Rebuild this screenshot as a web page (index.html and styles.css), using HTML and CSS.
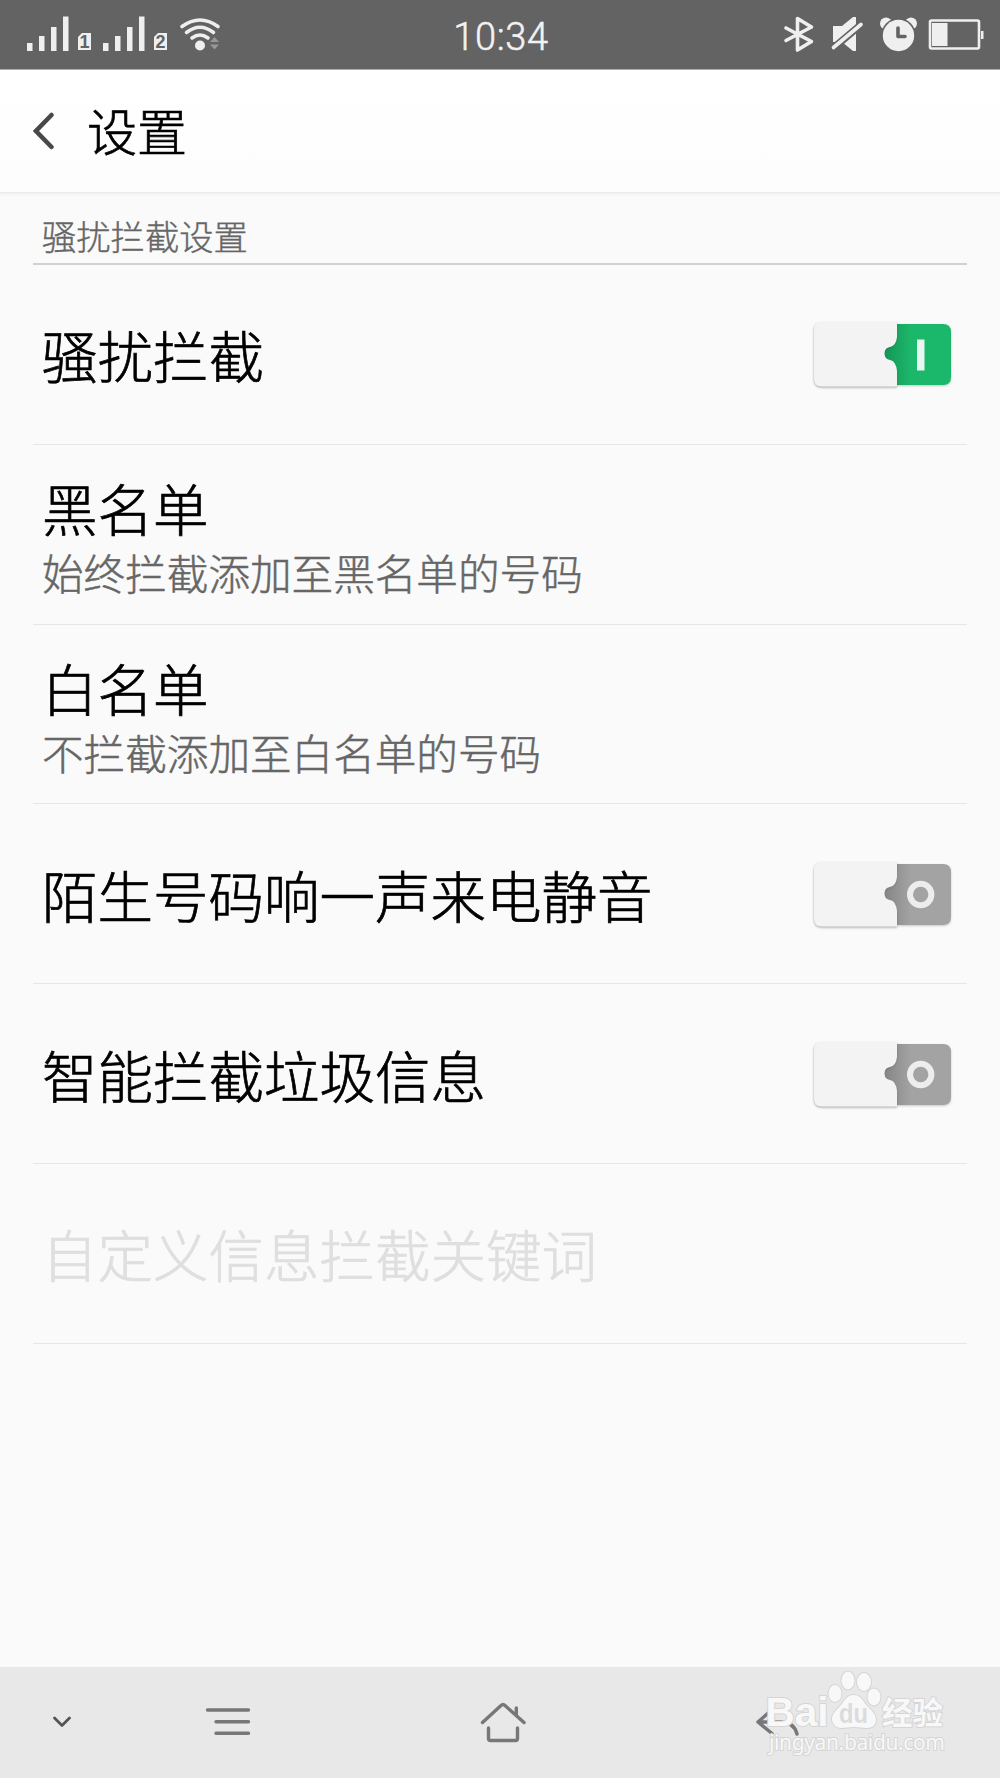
FILE: index.html
```
<!DOCTYPE html>
<html lang="zh-CN">
	<head>
		<meta charset="utf-8"/>
		<meta name="viewport" content="width=device-width, initial-scale=1.0"/>

		<title>设置</title>

		<link rel="stylesheet" href="styles.css">
	</head>
	<body>
		<div class="status-bar">
			<svg class="status-left" width="222" height="69" viewBox="0 0 222 69" fill="#efefef">
				<path d="M27 43h5.500v8h-5.500zM39 36h5.500v15h-5.500zM51 27h5.500v24h-5.500zM63 16.500h5.500v34.500h-5.500z"/>
				<path d="M103 43h5.500v8h-5.500zM115 36h5.500v15h-5.500zM127 27h5.500v24h-5.500zM139 16.500h5.500v34.500h-5.500z"/>
				<path d="M82 33h9v17h-13v-13zM158 33h9v17h-13v-13z"/>
				<text class="sim" x="84.500" y="48" text-anchor="middle">1</text>
				<text class="sim" x="160.500" y="48" text-anchor="middle">2</text>
				<circle cx="200" cy="45.500" r="5"/>
				<g fill="none" stroke="#efefef" stroke-width="3.600" stroke-linecap="round">
					<path d="M182 26.500Q200 13.500 218 26.500"/>
					<path d="M186.500 32.500Q200 22 213.500 32.500"/>
					<path d="M192 38Q200 32 208 38"/>
				</g>
				<path fill="#979797" d="M214.500 37l4.500 5h-9zM214.500 49.500l4.500-5h-9z"/>
			</svg>
			<span class="clock">10:34</span>
			<svg class="status-right" width="220" height="69" viewBox="780 0 220 69" fill="#efefef">
				<path fill="none" stroke="#efefef" stroke-width="3.600" stroke-linejoin="round" stroke-linecap="round" d="M786 28l25.500 13.500-14 8.500V18.500l14 8.500-25.500 13.500"/>
				<path d="M833 26h9l11-9h3v34h-3l-11-9h-9z"/>
				<path fill="none" stroke="#636363" stroke-width="7.500" d="M831 50l32-27"/>
				<path fill="none" stroke="#efefef" stroke-width="3.600" stroke-linecap="round" d="M833.500 47.500l27.500-23"/>
				<circle cx="886" cy="23.500" r="6"/>
				<circle cx="911" cy="23.500" r="6"/>
				<circle cx="898.500" cy="35.500" r="17.300" fill="#636363"/>
				<circle cx="898.500" cy="35.500" r="15.700"/>
				<path fill="none" stroke="#636363" stroke-width="3.600" stroke-linecap="round" stroke-linejoin="round" d="M898 28v8.500h7"/>
				<rect x="930" y="20.500" width="49" height="28" rx="1.500" fill="none" stroke="#efefef" stroke-width="2.600"/>
				<path d="M932 23h15.500v23h-15.500zM981 31h2.500v8h-2.500z"/>
			</svg>
		</div>

		<header class="title-bar">
			<svg class="back" width="22" height="38" viewBox="0 0 22 38">
				<path d="M18.500 3L3 19l15.500 16"/>
			</svg>
			<h1>设置</h1>
		</header>

		<main>
			<h2>骚扰拦截设置</h2>
			<ul>
				<li>
					<div class="name">骚扰拦截</div>
					<svg class="switch on" width="140" height="70" viewBox="0 0 140 70">
						<path class="track" d="M85 5h46q8 0 8 8v45q0 8-8 8H70V5z"/>
						<path class="shade" d="M70 5h29v61H70z"/>
						<path class="knob" d="M10 3H85V18Q84 27 78 28A6.600 6.600 0 0 0 78 41Q84 42 85 52V67.500H10Q2 67.500 2 59.500V11Q2 3 10 3z"/>
						<path class="mark" d="M105 20.500h7.500v31h-7.500z"/>
					</svg>
				</li>
				<li>
					<div class="entry">
						<div class="name">黑名单</div>
						<p>始终拦截添加至黑名单的号码</p>
					</div>
				</li>
				<li>
					<div class="entry">
						<div class="name">白名单</div>
						<p>不拦截添加至白名单的号码</p>
					</div>
				</li>
				<li>
					<div class="name">陌生号码响一声来电静音</div>
					<svg class="switch" width="140" height="70" viewBox="0 0 140 70">
						<path class="track" d="M85 5h46q8 0 8 8v45q0 8-8 8H70V5z"/>
						<path class="shade" d="M70 5h29v61H70z"/>
						<path class="knob" d="M10 3H85V18Q84 27 78 28A6.600 6.600 0 0 0 78 41Q84 42 85 52V67.500H10Q2 67.500 2 59.500V11Q2 3 10 3z"/>
						<circle class="ring" cx="108.700" cy="35.500" r="10.700"/>
					</svg>
				</li>
				<li>
					<div class="name">智能拦截垃圾信息</div>
					<svg class="switch" width="140" height="70" viewBox="0 0 140 70">
						<path class="track" d="M85 5h46q8 0 8 8v45q0 8-8 8H70V5z"/>
						<path class="shade" d="M70 5h29v61H70z"/>
						<path class="knob" d="M10 3H85V18Q84 27 78 28A6.600 6.600 0 0 0 78 41Q84 42 85 52V67.500H10Q2 67.500 2 59.500V11Q2 3 10 3z"/>
						<circle class="ring" cx="108.700" cy="35.500" r="10.700"/>
					</svg>
				</li>
				<li class="disabled">
					<div class="name">自定义信息拦截关键词</div>
				</li>
			</ul>
		</main>

		<!-- gradient shared by the switches -->
		<svg class="defs" width="0" height="0">
			<linearGradient id="shade">
				<stop offset="0" stop-color="#000" stop-opacity="0.2"/>
				<stop offset="1" stop-color="#000" stop-opacity="0"/>
			</linearGradient>
		</svg>

		<nav>
			<svg class="nav-icon hide" width="20" height="14" viewBox="0 0 20 14">
				<path d="M2.500 3L10 10.500 17.500 3"/>
			</svg>
			<svg class="nav-icon menu" width="48" height="32" viewBox="0 0 48 32">
				<path d="M3.500 4h41M12 15.700h32.500M12 27.300h32.500"/>
			</svg>
			<svg class="nav-icon home" width="48" height="44" viewBox="0 0 48 44">
				<path d="M3.500 22.500L22 5.500Q24 3.500 26 5.500L45 22.500M37.300 15V8M9.500 28v10.500q0 2 2 2h25q2 0 2-2V28"/>
			</svg>
			<svg class="nav-icon return" width="46" height="32" viewBox="0 0 46 32">
				<path d="M16 4.500L3 16l14 11.500M3 16h23q13 0 16 12"/>
			</svg>
			<svg class="watermark" width="190" height="96" viewBox="760 1666 190 96">
				<text class="brand" x="765.500" y="1726" textLength="63" lengthAdjust="spacingAndGlyphs">Bai</text>
				<g class="paw">
					<ellipse cx="835" cy="1693.500" rx="6.500" ry="8.500"/>
					<ellipse cx="848" cy="1680.500" rx="6.500" ry="9"/>
					<ellipse cx="864" cy="1682" rx="7" ry="9"/>
					<ellipse cx="874" cy="1697" rx="6.500" ry="8.500"/>
					<path d="M854 1695c7 0 9 6 13 11 5 5 9 8 9 14 0 5-4 8-9 8-5 0-8-1-13-1s-8 1-13 1c-5 0-9-4-9-9 0-6 5-9 9-14 4-5 6-10 13-10z"/>
				</g>
				<text class="du" x="839" y="1723" textLength="29" lengthAdjust="spacingAndGlyphs">du</text>
				<text class="jingyan" x="882" y="1724" textLength="61" lengthAdjust="spacingAndGlyphs">经验</text>
				<text class="site" x="769" y="1750" textLength="176">jingyan.baidu.com</text>
			</svg>
		</nav>
	</body>
</html>
```

FILE: styles.css
```
* {
	box-sizing: border-box;
}

body {
	margin: 0;
	height: 1778px;
	display: flex;
	flex-direction: column;
	background: #fafafa;
	color: #000;
	font-family: "Noto Sans CJK SC", sans-serif;
	font-weight: 300;
}
svg {
	display: block;
	flex: none;
}
.defs {
	position: absolute;
}

.status-bar {
	display: flex;
	justify-content: space-between;
	height: 70px;
	background: #636363;
	border-bottom: 1px solid #b0b0b0;
}
.sim {
	font: bold 18px "Liberation Sans", sans-serif;
	fill: #636363;
}
.clock {
	font: 300 38px/75px Roboto, sans-serif;
	letter-spacing: 0.600px;
	color: #f2f2f2;
	-webkit-text-stroke: 0.500px #f2f2f2;
}

.title-bar {
	display: flex;
	align-items: center;
	height: 123px;
	padding-left: 33px;
	background: linear-gradient(#fff, #fdfdfd);
	border-bottom: 1px solid #ebebeb;
	box-shadow: 0 1px 4px rgba(0, 0, 0, 0.06);
}
.back path {
	fill: none;
	stroke: #484848;
	stroke-width: 4.500;
	stroke-linecap: round;
}
h1 {
	margin: 0 0 4px 32px;
	font-size: 50px;
	font-weight: 300;
	line-height: 60px;
	-webkit-text-stroke: 0.700px;
}

main {
	flex: 1;
	padding: 0 33px;
}
h2 {
	height: 72px;
	margin: 0;
	padding: 17px 0 0 9px;
	border-bottom: 2px solid #d2d2d2;
	color: #666;
	font-size: 34.300px;
	font-weight: 300;
	line-height: 50px;
	-webkit-text-stroke: 0.400px;
}
ul {
	margin: 0;
	padding: 0;
	list-style: none;
}
li {
	display: flex;
	align-items: center;
	justify-content: space-between;
	height: 179.800px;
	padding: 0 15px 0 9px;
	border-bottom: 1px solid #e6e6e6;
}
.entry {
	padding-top: 10px;
}
.name {
	font-size: 55.500px;
	line-height: 66px;
	-webkit-text-stroke: 0.700px;
}
li p {
	margin: 0;
	color: #666;
	font-size: 41.600px;
	line-height: 64px;
	-webkit-text-stroke: 0.500px;
}
.disabled {
	color: #dedfde;
}

.switch {
	overflow: visible;
	filter: drop-shadow(0 1px 1px rgba(0, 0, 0, 0.2));
}
.track {
	fill: #a3a3a3;
}
.on .track {
	fill: #1bb76a;
}
.shade {
	fill: url(#shade);
}
.knob {
	fill: #f3f3f3;
	filter: drop-shadow(0 1px 1px rgba(0, 0, 0, 0.15));
}
.mark {
	fill: #e8f8f0;
}
.ring {
	fill: none;
	stroke: #ededed;
	stroke-width: 6;
}

nav {
	position: relative;
	display: flex;
	align-items: center;
	height: 111px;
	padding: 0 0 2px 52px;
	background: #e8e8e8;
}
.nav-icon {
	fill: none;
	stroke: #777;
	stroke-width: 3.400;
	stroke-linecap: round;
	stroke-linejoin: round;
}
.hide {
	stroke: #555;
	stroke-width: 2.800;
}
.menu {
	margin-left: 132px;
}
.home {
	margin-left: 227px;
}
.return {
	margin-left: 228px;
}

.watermark {
	position: absolute;
	left: 760px;
	top: -1px;
	fill: #f8f8f8;
	stroke: #d5d5d5;
	stroke-width: 2;
	paint-order: stroke;
	font-family: "Liberation Sans", sans-serif;
}
.brand {
	font-size: 40px;
	font-weight: bold;
}
.du {
	font-size: 27px;
	font-weight: bold;
	fill: #dcdcdc;
	stroke: none;
}
.jingyan {
	font-family: "Noto Sans CJK SC", sans-serif;
	font-size: 31px;
	font-weight: bold;
}
.site {
	font-family: "Noto Sans", sans-serif;
	font-size: 21px;
	font-weight: normal;
}
```
